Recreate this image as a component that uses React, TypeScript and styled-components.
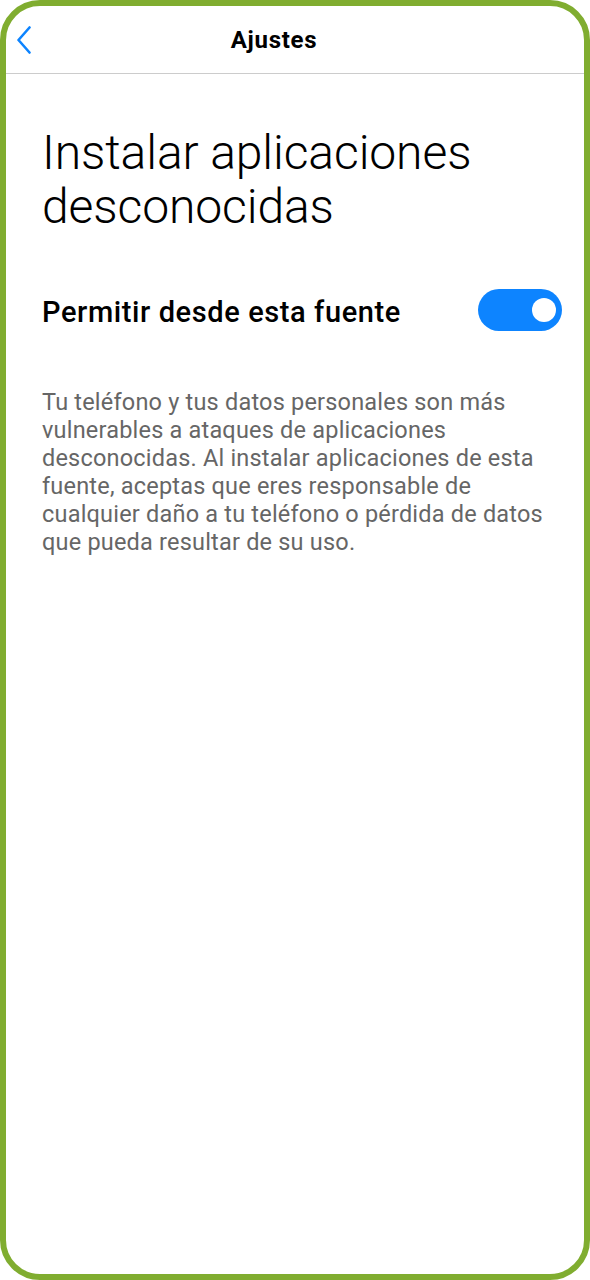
import React, { useState } from 'react';
import styled, { createGlobalStyle } from 'styled-components';

const GlobalStyle = createGlobalStyle`
  html, body {
    margin: 0;
    padding: 0;
    background: #ffffff;
  }
  body {
    font-family: Roboto, "Noto Sans", Arial, sans-serif;
  }
  * {
    box-sizing: border-box;
  }
`;

const Frame = styled.div`
  width: 590px;
  height: 1280px;
  border: 6px solid #80ad30;
  border-radius: 40px;
  background: #ffffff;
  overflow: hidden;
  display: flex;
  flex-direction: column;
`;

const Header = styled.header`
  position: relative;
  height: 68px;
  display: flex;
  align-items: center;
  justify-content: center;
  border-bottom: 1px solid #cccccc;
`;

const BackButton = styled.button`
  position: absolute;
  left: 6px;
  top: 19px;
  width: 24px;
  height: 30px;
  padding: 0;
  border: 0;
  background: none;
  cursor: pointer;
  display: flex;
  align-items: center;
  justify-content: center;
`;

const HeaderTitle = styled.h1`
  margin: 0;
  font-size: 24px;
  font-weight: 700;
  letter-spacing: 0.7px;
  color: #000000;
  padding-right: 42px;
`;

const Content = styled.main`
  padding: 52px 22px 0 36px;
  display: flex;
  flex-direction: column;
`;

const PageTitle = styled.h2`
  margin: 0;
  font-size: 48px;
  font-weight: 300;
  line-height: 54px;
  color: #000000;
  letter-spacing: -0.1px;
`;

const SettingRow = styled.div`
  margin-top: 55px;
  display: flex;
  align-items: center;
  justify-content: space-between;
`;

const SettingLabel = styled.span`
  font-size: 29px;
  font-weight: 500;
  letter-spacing: 0.6px;
  color: #000000;
  margin-top: 4px;
`;

const Switch = styled.button<{ $on: boolean }>`
  width: 84px;
  height: 42px;
  border-radius: 21px;
  border: 0;
  padding: 0 6px;
  background: ${(p) => (p.$on ? '#0d84ff' : '#c8c8c8')};
  display: flex;
  align-items: center;
  justify-content: ${(p) => (p.$on ? 'flex-end' : 'flex-start')};
  cursor: pointer;
`;

const Knob = styled.span`
  width: 24px;
  height: 24px;
  border-radius: 50%;
  background: #ffffff;
`;

const Description = styled.p`
  margin: 57px 0 0;
  padding-right: 12px;
  font-size: 23.5px;
  line-height: 28px;
  letter-spacing: 0.2px;
  color: #666666;
  font-weight: 400;
`;

export default function App() {
  const [allowed, setAllowed] = useState(true);

  return (
    <>
      <GlobalStyle />
      <Frame>
        <Header>
          <BackButton aria-label="Atrás">
            <svg width="16" height="28" viewBox="0 0 16 28" fill="none">
              <path
                d="M13.5 1.5 L2.5 14 L13.5 26.5"
                stroke="#0d84ff"
                strokeWidth="2.6"
                strokeLinecap="round"
                strokeLinejoin="round"
              />
            </svg>
          </BackButton>
          <HeaderTitle>Ajustes</HeaderTitle>
        </Header>
        <Content>
          <PageTitle>
            Instalar aplicaciones
            <br />
            desconocidas
          </PageTitle>
          <SettingRow>
            <SettingLabel>Permitir desde esta fuente</SettingLabel>
            <Switch $on={allowed} onClick={() => setAllowed(!allowed)}>
              <Knob />
            </Switch>
          </SettingRow>
          <Description>
            Tu teléfono y tus datos personales son más vulnerables a ataques de
            aplicaciones desconocidas. Al instalar aplicaciones de esta fuente,
            aceptas que eres responsable de cualquier daño a tu teléfono o
            pérdida de datos que pueda resultar de su uso.
          </Description>
        </Content>
      </Frame>
    </>
  );
}
